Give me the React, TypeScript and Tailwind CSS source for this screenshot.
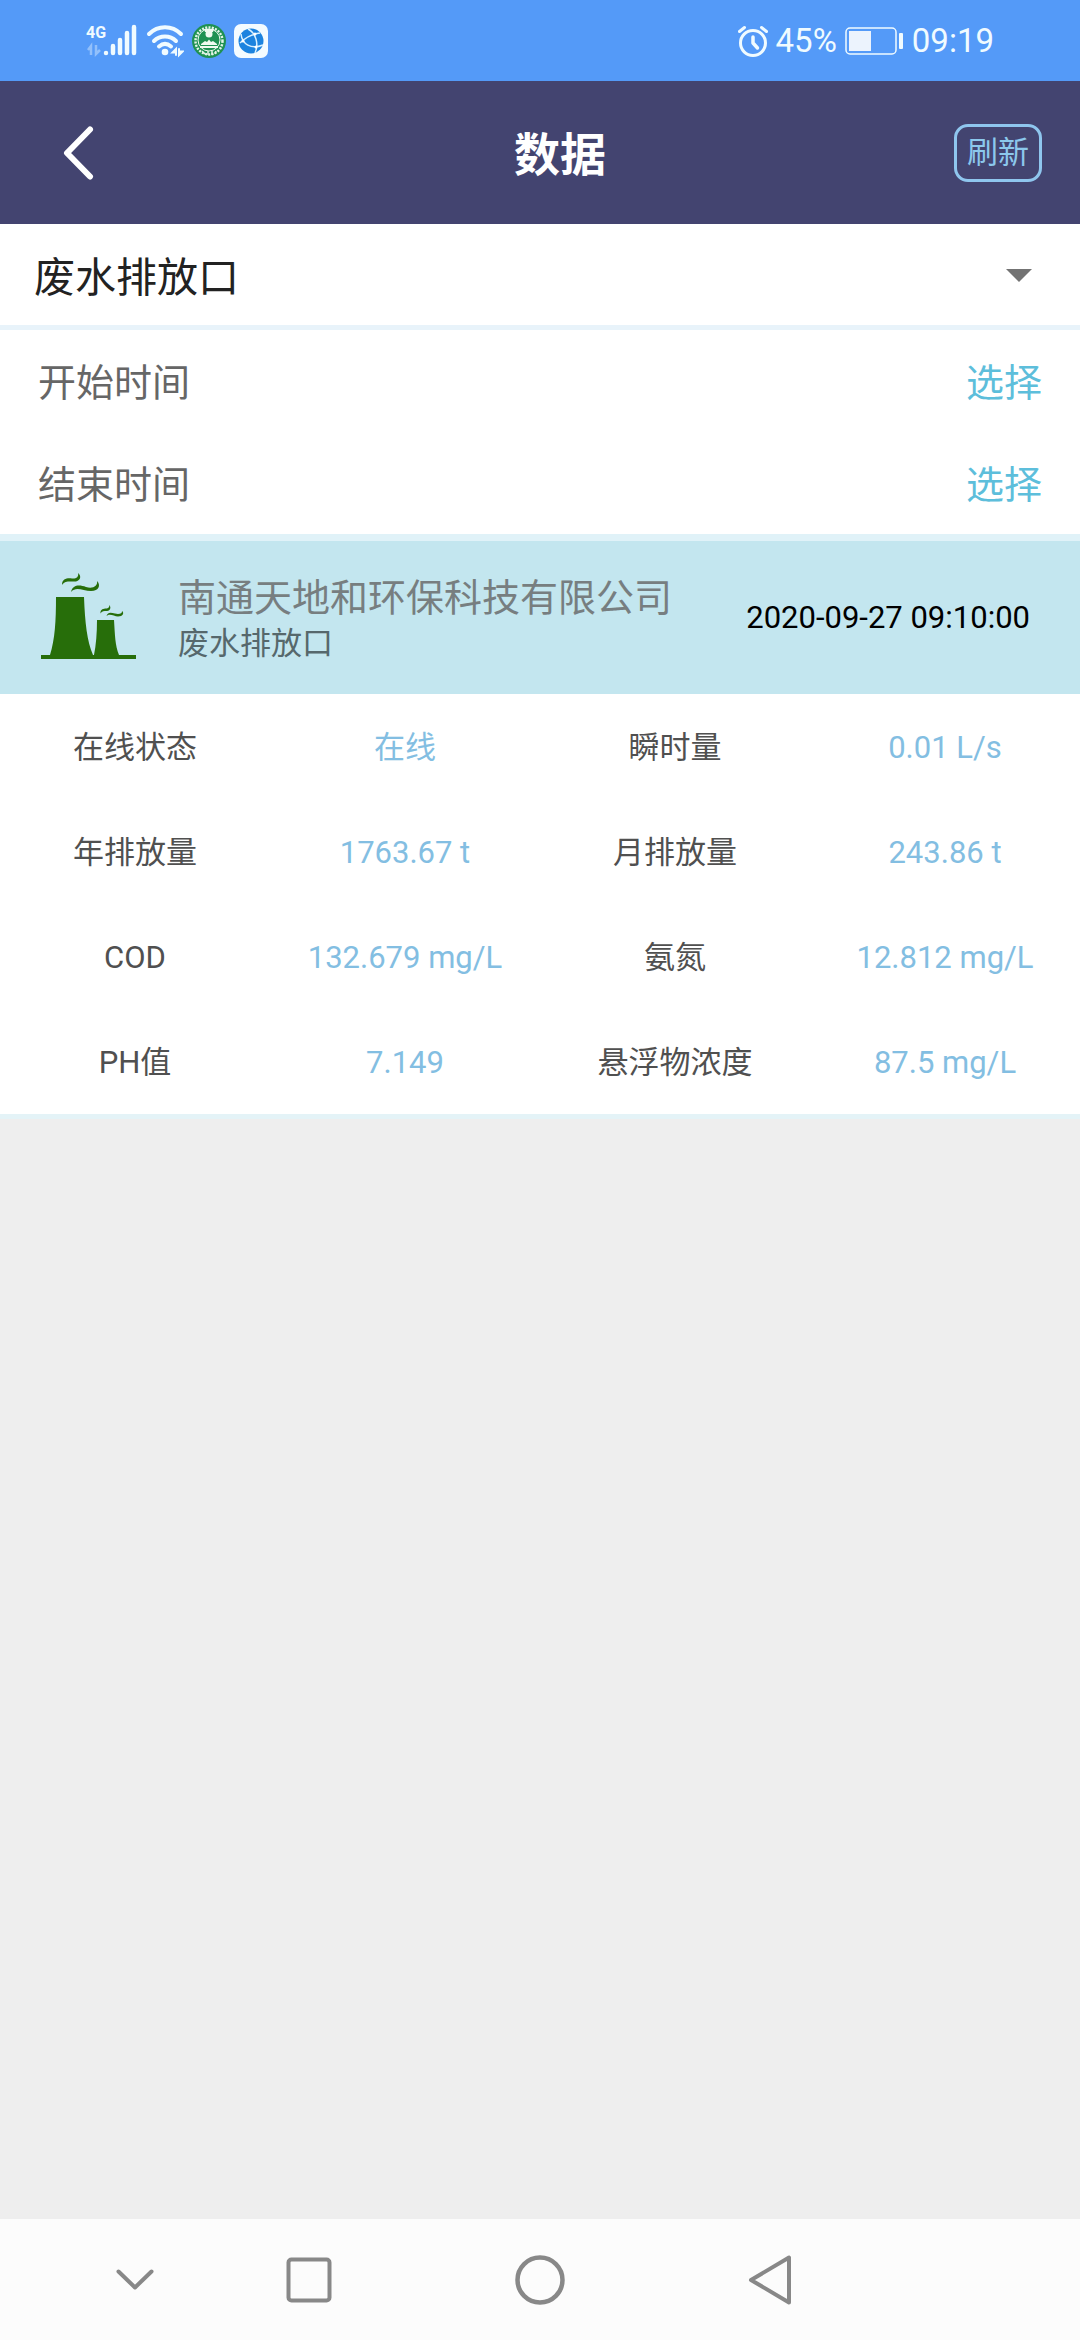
import React from 'react'

const rows = [
  ['在线状态', '在线', '瞬时量', '0.01 L/s'],
  ['年排放量', '1763.67 t', '月排放量', '243.86 t'],
  ['COD', '132.679 mg/L', '氨氮', '12.812 mg/L'],
  ['PH值', '7.149', '悬浮物浓度', '87.5 mg/L'],
]

function StatusBar() {
  return (
    <div className="h-[81px] px-[86px] flex items-center justify-between bg-[#549af8] text-[#f0fbff]">
      <div className="flex items-center gap-2">
        {/* Signal */}
        <svg width="52" height="34" viewBox="0 0 52 34" fill="none">
          <text x="0" y="14" fontSize="16" fontWeight="700" fill="currentColor">4G</text>
          <path d="M5 31V22L2 26M10 21V30L14 26" stroke="currentColor" strokeWidth="2.5" opacity="0.4" />
          <path d="M20 29V29.1M27 22V29M34 16V29M41 9V29M48 3V29" stroke="currentColor" strokeWidth="4.5" strokeLinecap="round" />
        </svg>
        {/* Wifi */}
        <svg width="38" height="34" viewBox="0 0 38 34" fill="none" stroke="currentColor" strokeLinecap="round">
          <path d="M3 10C12 1 26 1 35 10" strokeWidth="4" />
          <path d="M8 17C14 11 24 11 30 17" strokeWidth="4" />
          <path d="M13 22.5C17 19 21 19 25 22.5" strokeWidth="4" />
          <circle cx="19" cy="28" r="3.3" fill="currentColor" stroke="none" />
          <path d="M30 31V25L26.5 28.5H30M33 25V31L36.500 27.5H33" strokeWidth="2" />
        </svg>
        {/* Environment bureau emblem */}
        <svg width="34" height="34" viewBox="0 0 34 34" fill="none">
          <circle cx="17" cy="17" r="17" fill="#1f9152" />
          <circle cx="17" cy="17" r="13.5" stroke="#e4f5e8" strokeWidth="2.5" strokeDasharray="2 1.3" />
          <circle cx="17" cy="16" r="11" fill="#1f9152" stroke="#f0faf0" strokeWidth="1" />
          <path d="M12 5H22L21 8H13Z" fill="#f0faf0" />
          <circle cx="17" cy="10" r="3.5" fill="#f0faf0" />
          <path d="M9 20L13 17L15 18L17 15.5L19 18L21 17L25 20V21H9Z" fill="#f0faf0" />
          <path d="M8 23H26" stroke="#f0faf0" strokeWidth="2" />
          <path d="M10 27L13 30M16 27V31M20 27V31M24 27L23 30" stroke="#e4f5e8" strokeWidth="1.5" />
        </svg>
        {/* Browser */}
        <svg width="34" height="34" viewBox="0 0 34 34" fill="none">
          <rect width="34" height="34" rx="7" fill="#f4fbff" />
          <circle cx="17" cy="17" r="12.5" fill="#1c83df" />
          <path d="M14 5C22 9 25 20 21 29M6 19C12 13 18 10 26 9M7 10C8 20 17 26 29 21" stroke="#d8f0ff" strokeWidth="1.5" />
          <circle cx="21" cy="10" r="1.5" fill="#fff" />
          <circle cx="9" cy="17" r="1.5" fill="#fff" />
          <circle cx="22" cy="23" r="1.5" fill="#fff" />
        </svg>
      </div>
      <div className="flex items-center gap-2 text-[33px] leading-[40px]">
        {/* Alarm */}
        <svg width="30" height="32" viewBox="0 0 30 32" fill="none" stroke="currentColor" strokeLinecap="round">
          <circle cx="15" cy="18" r="12.5" strokeWidth="3" />
          <path d="M1.5 6.5L6.5 2.5M28.5 6.5L23.5 2.5" strokeWidth="3" />
          <path d="M15 12V18L19.5 23" strokeWidth="3.5" strokeLinejoin="round" />
        </svg>
        <span>45%</span>
        {/* Battery */}
        <svg width="59" height="28" viewBox="0 0 59 28" fill="none">
          <rect x="1" y="1" width="50" height="26" rx="4" stroke="currentColor" strokeWidth="1.5" />
          <rect x="4" y="4" width="22" height="20" fill="#ecf3fd" />
          <rect x="54" y="6" width="4" height="16" rx="1" fill="currentColor" />
        </svg>
        <span>09:19</span>
      </div>
    </div>
  )
}

function Header() {
  return (
    <header className="h-[143px] px-[38px] flex items-center justify-between bg-[#434470]">
      <button aria-label="返回" className="w-32 h-24 pl-6">
        <svg width="34" height="54" viewBox="0 0 34 54" fill="none" stroke="#fff" strokeWidth="6" strokeLinecap="round" strokeLinejoin="round">
          <path d="M28 3.5L5 27L28 50.5" />
        </svg>
      </button>
      <h1 className="pt-1 text-[46px] leading-[64px] font-bold text-white">数据</h1>
      <button className="w-[88px] h-[58px] rounded-[14px] border-3 border-[#8fc6ee] text-[31px] leading-[40px] text-[#8cc8ec]">
        刷新
      </button>
    </header>
  )
}

function FactoryIcon() {
  return (
    <svg width="95" height="86" viewBox="0 0 95 86" fill="#276e0a" className="shrink-0 mb-1">
      <path d="M15 24H43C44 50 46 68 52 82H53C55 72 56 60 56 47H73C74 62 74 72 78 82H95V86H0V82H9C14 66 15 48 15 24Z" />
      <path d="M21 12C21 5 27 5 31 5.5C35 6 38 4 37 0C40 2 40.5 7 35 8.5C31 9 24 7 21 12Z" />
      <path d="M30 19C32 11 39 12 45 14C52 16 57 13 56 8C60 12 58 18 50 18C42 18 35 13 30 19Z" />
      <path d="M59.5 40.5C59 36 63 35.5 65 35.5C67 35.5 69 34 68 32C70.5 34 69.5 37.5 66 38C63 38 61 38 59.5 40.5Z" />
      <path d="M65.5 43C67 38.5 70 39.5 74 40.5C78 41.5 81.5 40.5 81 38C83.5 40 82 43.5 77 43.5C73 43.5 69 40 65.5 43Z" />
    </svg>
  )
}

function NavBar() {
  return (
    <nav className="h-[121px] pl-[7%] pr-[18%] grid grid-cols-[118fr_230fr_230fr_230fr] bg-[#fcfcfc] text-[#888888]">
      <button aria-label="收起" className="flex items-center justify-center">
        <svg width="38" height="22" viewBox="0 0 38 22" fill="none" stroke="currentColor" strokeWidth="4" strokeLinecap="round" strokeLinejoin="round">
          <path d="M2.5 2.5L19 18.5L35.5 2.5" />
        </svg>
      </button>
      <button aria-label="最近任务" className="flex items-center justify-center">
        <svg width="46" height="46" viewBox="0 0 46 46" fill="none" stroke="currentColor" strokeWidth="4">
          <rect x="2.5" y="2.5" width="41" height="41" rx="3" />
        </svg>
      </button>
      <button aria-label="主页" className="flex items-center justify-center">
        <svg width="50" height="50" viewBox="0 0 50 50" fill="none" stroke="currentColor" strokeWidth="4.5">
          <circle cx="25" cy="25" r="22.5" />
        </svg>
      </button>
      <button aria-label="后退" className="flex items-center justify-center">
        <svg width="44" height="50" viewBox="0 0 44 50" fill="none" stroke="currentColor" strokeWidth="4" strokeLinejoin="round">
          <path d="M41 2.5V47.5L3 25Z" />
        </svg>
      </button>
    </nav>
  )
}

function App() {
  return (
    <div className="min-h-screen flex flex-col bg-[#eeeeee] font-['Roboto','Noto_Sans_CJK_SC',sans-serif]">
      <StatusBar />
      <Header />

      {/* Outlet picker */}
      <div className="relative bg-white border-b-5 border-[#e8f3fa]">
        <select aria-label="排放口" className="block w-full h-[101px] px-[34px] pt-2 appearance-none bg-transparent text-[41px] text-[#222222] outline-none">
          <option>废水排放口</option>
        </select>
        <svg width="26" height="13" viewBox="0 0 26 13" className="absolute right-12 top-[45px] pointer-events-none">
          <path d="M0 0H26L13 13Z" fill="#737373" />
        </svg>
      </div>

      {/* Time range */}
      <div className="bg-white px-[38px] border-b-7 border-[#e0f2f8] text-[38px] leading-[56px]">
        <div className="h-[102px] pt-1 flex items-center justify-between">
          <span className="text-[#666666]">开始时间</span>
          <button className="text-[#5dbedb]">选择</button>
        </div>
        <div className="h-[102px] pt-1 flex items-center justify-between">
          <span className="text-[#666666]">结束时间</span>
          <button className="text-[#5dbedb]">选择</button>
        </div>
      </div>

      {/* Company */}
      <div className="h-[153px] pl-[41px] pr-[50px] flex items-center gap-[42px] bg-[#c3e6ef]">
        <FactoryIcon />
        <div className="flex-1 pt-1">
          <h2 className="text-[38px] leading-[48px] text-[#777e80]">南通天地和环保科技有限公司</h2>
          <p className="text-[31px] leading-[44px] text-[#56686c]">废水排放口</p>
        </div>
        <time className="text-[31px] leading-[40px] text-black">2020-09-27 09:10:00</time>
      </div>

      {/* Readings */}
      <div className="bg-white border-b-5 border-[#e4f3f7]">
        <table className="w-full table-fixed text-[31px] leading-[44px] text-center">
          <tbody>
            {rows.map((row) => (
              <tr key={row[0]} className="h-[105px]">
                <th scope="row" className="pt-[2px] font-normal text-[#505050]">{row[0]}</th>
                <td className="pt-[2px] text-[#83bee2]">{row[1]}</td>
                <th scope="row" className="pt-[2px] font-normal text-[#505050]">{row[2]}</th>
                <td className="pt-[2px] text-[#83bee2]">{row[3]}</td>
              </tr>
            ))}
          </tbody>
        </table>
      </div>

      <div className="flex-1" />
      <NavBar />
    </div>
  )
}

export default App
